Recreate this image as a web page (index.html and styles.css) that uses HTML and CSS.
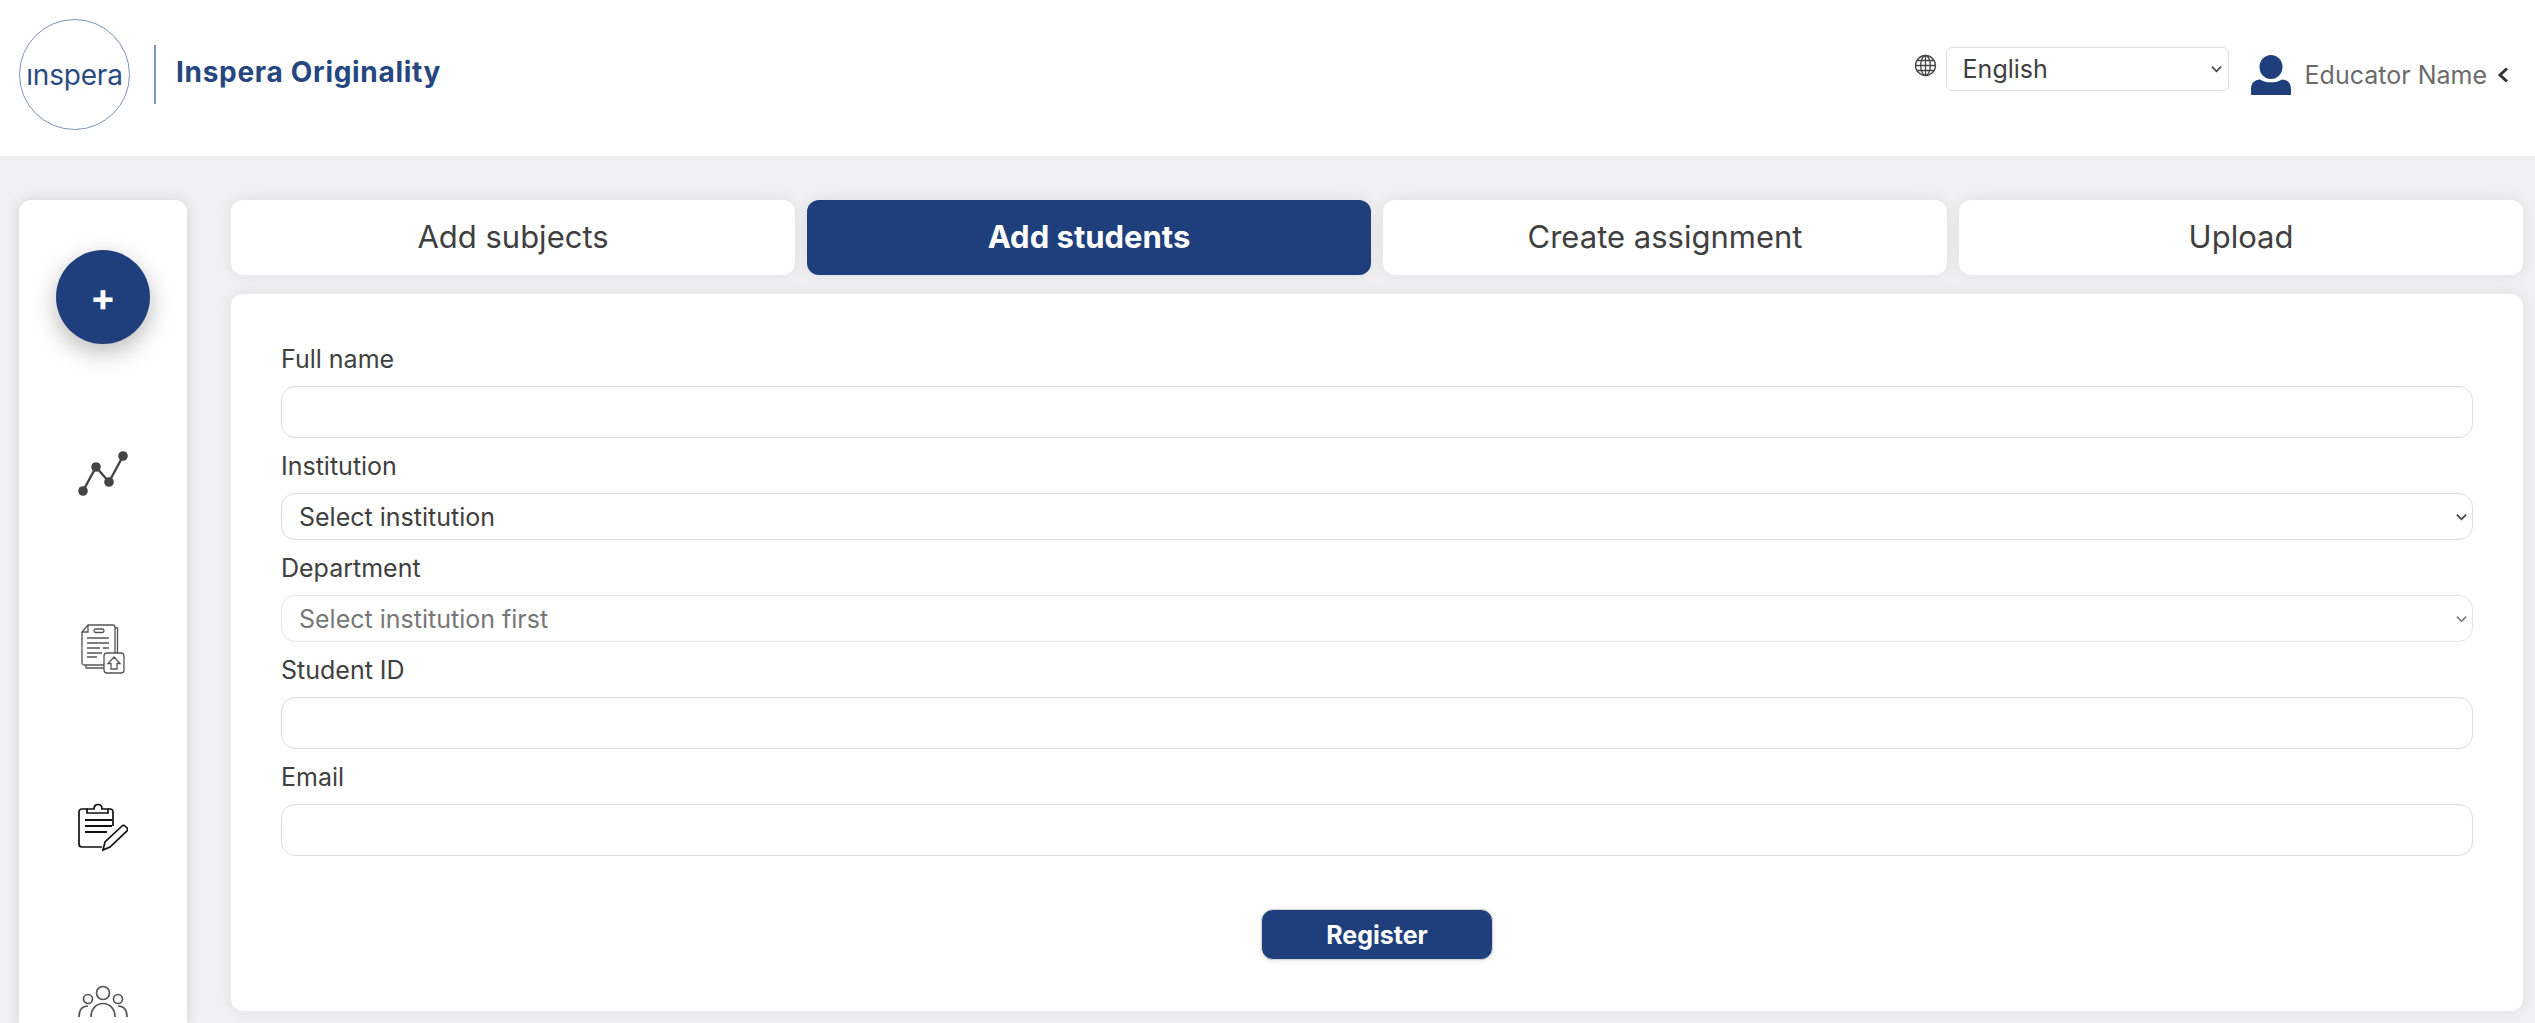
FILE: index.html
```html
<!DOCTYPE html>
<html lang="en">
<head>
<meta charset="utf-8">
<title>Inspera Originality</title>
<link rel="stylesheet" href="styles.css">
</head>
<body>
<header class="topbar">
  <div class="brand">
    <div class="logo-circle"><span class="logo-word">ınspera</span></div>
    <div class="brand-rule"></div>
    <div class="brand-name">Inspera Originality</div>
  </div>
  <div class="top-actions">
    <svg class="globe" viewBox="0 0 22 23" fill="none" stroke="#444" stroke-width="1.300">
      <circle cx="11" cy="11.500" r="10"/><ellipse cx="11" cy="11.500" rx="4.800" ry="10"/>
      <path d="M11 1.500v20M1 11.500h20M2.400 6.500h17.200M2.400 16.500h17.200"/>
    </svg>
    <select class="lang"><option>English</option></select>
    <svg class="user" viewBox="0 0 40 40" fill="#1e3f7c">
      <ellipse cx="20" cy="12" rx="11.500" ry="12"/>
      <path d="M0 40v-6c0-6 4-9.500 9-9.500 3 2 7 2.800 11 2.800s8-.8 11-2.800c5 0 9 3.500 9 9.500v6z"/>
    </svg>
    <span class="user-name">Educator Name</span>
    <svg class="caret" viewBox="0 0 12 16" fill="none" stroke="#333" stroke-width="3"><path d="M10 1.500 3 8l7 6.500"/></svg>
  </div>
</header>
<div class="page">
  <aside class="sidebar">
    <button class="fab">+</button>
    <svg class="nav-icon nav-chart" viewBox="0 0 50 46" fill="#444" stroke="#444" stroke-width="2.400">
      <path d="M5 40 18 16 31 31 45 5" fill="none"/>
      <circle cx="5" cy="40" r="4.800" stroke="none"/><circle cx="18" cy="16" r="4.800" stroke="none"/><circle cx="31" cy="31" r="4.800" stroke="none"/><circle cx="45" cy="5" r="4.800" stroke="none"/>
    </svg>
    <svg class="nav-icon nav-doc" viewBox="0 0 44 50" fill="none" stroke="#555" stroke-width="1.300">
      <path d="M7 1h25a2 2 0 0 1 2 2v38H3a2 2 0 0 1-2-2V8z"/>
      <path d="M7 1v7H1"/><path d="M34 4h2.500v40H5V41"/>
      <rect x="13" y="5" width="10" height="3.500" rx="1.700"/>
      <path d="M6 14h22M6 19h22M6 24h13M22 24h6M6 29h15M6 33h10"/>
      <rect x="23" y="29" width="20" height="20" rx="3" fill="#fff"/>
      <path d="M33 33l6 6.500h-3V45h-6v-5.500h-3z"/>
    </svg>
    <svg class="nav-icon nav-clip" viewBox="0 0 50 50" fill="none" stroke="#111" stroke-width="1.700">
      <path d="M10 7H4a3 3 0 0 0-3 3v32a3 3 0 0 0 3 3h20M30 7h2a3 3 0 0 1 3 3v14"/>
      <path d="M9 11V7h7c0-6 8-6 8 0h6v4z" fill="#fff"/>
      <path d="M7 18h27M7 24h27M7 30h22" stroke-width="1.800"/>
      <path d="M25 48l2-8 17-16a2 2 0 0 1 3 0l2 2a2 2 0 0 1 0 3L32 45z"/>
    </svg>
    <svg class="nav-icon nav-people" viewBox="0 0 50 32" fill="none" stroke="#555" stroke-width="1.700">
      <circle cx="25" cy="8" r="6.500"/><circle cx="10" cy="14" r="4.500"/><circle cx="40" cy="14" r="4.500"/>
      <path d="M13 32c0-18 24-18 24 0M1 32c0-8 4-11 9-11M49 32c0-8-4-11-9-11"/>
    </svg>
  </aside>
  <main class="content">
    <nav class="tabs">
      <div class="tab">Add subjects</div>
      <div class="tab tab-active">Add students</div>
      <div class="tab">Create assignment</div>
      <div class="tab">Upload</div>
    </nav>
    <section class="panel">
      <label class="field-label">Full name</label>
      <input class="control text-input" type="text">
      <label class="field-label">Institution</label>
      <select class="control picker"><option>Select institution</option></select>
      <label class="field-label">Department</label>
      <select class="control picker picker-off" disabled><option>Select institution first</option></select>
      <label class="field-label">Student ID</label>
      <input class="control text-input" type="text">
      <label class="field-label">Email</label>
      <input class="control text-input" type="text">
      <div class="actions"><button class="register">Register</button></div>
    </section>
  </main>
</div>
</body>
</html>
```
FILE: styles.css
```css
* { box-sizing: border-box; }
html, body { margin: 0; height: 1023px; overflow: hidden; }
body { background: #f0f0f3; font-family: Inter, "Liberation Sans", sans-serif; color: #404040; }

.topbar { height: 156px; background: #fff; display: flex; justify-content: space-between; align-items: flex-start; padding: 19px 26px 0 19px; }
.brand { display: flex; align-items: center; }
.logo-circle { width: 111px; height: 111px; border: 1.500px solid #7d91b6; border-radius: 50%; display: flex; align-items: center; justify-content: center; }
.logo-word { color: #2b4b83; font-size: 28px; font-weight: 400; letter-spacing: -0.200px; }
.brand-rule { width: 2px; height: 59px; background: #8194b8; margin: 0 20px 0 24px; }
.brand-name { color: #25467f; font-size: 28px; font-weight: 700; letter-spacing: 0.700px; margin-top: -6px; }

.top-actions { display: flex; align-items: flex-start; padding-top: 28px; }
.globe { width: 23px; height: 23px; margin-top: 7px; margin-right: 9px; }
.lang { appearance: none; width: 283px; height: 44px; margin-right: 22px; border: 1px solid #e0e0e0; border-radius: 6px; background: #fff url("data:image/svg+xml,%3Csvg xmlns='http://www.w3.org/2000/svg' viewBox='0 0 12 8'%3E%3Cpath d='M1 1.500 6 6.500 11 1.500' fill='none' stroke='%23444' stroke-width='1.800'/%3E%3C/svg%3E") no-repeat right 6px center / 11px 8px; color: #404040; font: 400 25px Inter, sans-serif; padding-left: 16px; }
.user { width: 40px; height: 40px; margin-top: 8px; margin-right: 14px; }
.user-name { font-size: 25px; line-height: 30px; color: #6b6b6b; margin-top: 13px; margin-right: 10px; white-space: nowrap; }
.caret { width: 12px; height: 16px; margin-top: 20px; }

.page { display: flex; align-items: flex-start; padding: 44px 12px 0 19px; gap: 44px; }
.sidebar { width: 168px; height: 823px; flex: none; overflow: hidden; background: #fff; border-radius: 12px 12px 0 0; box-shadow: 0 0 14px rgba(0, 0, 0, 0.12); display: flex; flex-direction: column; align-items: center; padding-top: 50px; }
.fab { width: 94px; height: 94px; flex: none; border: 0; border-radius: 50%; background: #1e3f7c; color: #fff; font: 700 38px/94px Inter, sans-serif; padding: 0; box-shadow: 0 8px 24px rgba(0, 0, 0, 0.28); }
.nav-icon { display: block; flex: none; }
.nav-chart { width: 50px; height: 46px; margin-top: 107px; }
.nav-doc { width: 44px; height: 50px; margin-top: 127px; }
.nav-clip { width: 50px; height: 50px; margin-top: 128px; }
.nav-people { width: 50px; height: 32px; margin-top: 133px; }

.content { flex: 1; min-width: 0; }
.tabs { display: grid; grid-template-columns: repeat(4, 1fr); gap: 12px; }
.tab { height: 75px; background: #fff; border-radius: 12px; box-shadow: 0 0 16px rgba(0, 0, 0, 0.07); display: flex; align-items: center; justify-content: center; font-size: 31px; color: #404040; padding-bottom: 2px; }
.tab-active { background: #1e3f7c; color: #fff; font-weight: 700; }

.panel { margin-top: 19px; height: 717px; background: #fff; border-radius: 12px; box-shadow: 0 0 16px rgba(0, 0, 0, 0.07); padding: 51px 50px 0; display: flex; flex-direction: column; }
.field-label { display: block; font-size: 25px; line-height: 29px; height: 41px; }
.control { display: block; width: 100%; background: #fff; border: 1.500px solid #dddddd; border-radius: 14px; margin-bottom: 14px; outline: 0; }
.text-input { height: 52px; }
.picker { appearance: none; height: 47px; font: 400 25px Inter, sans-serif; color: #404040; padding-left: 17px; background: #fff url("data:image/svg+xml,%3Csvg xmlns='http://www.w3.org/2000/svg' viewBox='0 0 12 8'%3E%3Cpath d='M1 1.500 6 6.500 11 1.500' fill='none' stroke='%23444' stroke-width='2'/%3E%3C/svg%3E") no-repeat right 5px center / 11px 8px; }
.picker-off { color: #777; opacity: 1; border-color: #e6e6e6; background-image: url("data:image/svg+xml,%3Csvg xmlns='http://www.w3.org/2000/svg' viewBox='0 0 12 8'%3E%3Cpath d='M1 1.500 6 6.500 11 1.500' fill='none' stroke='%23808080' stroke-width='2'/%3E%3C/svg%3E"); }
.actions { display: flex; justify-content: center; margin-top: 39px; }
.register { width: 232px; height: 51px; border: 1px solid #d4d4d8; border-radius: 12px; background: #1e3f7c; color: #fff; font: 700 25px Inter, sans-serif; box-shadow: 0 1px 5px rgba(0, 0, 0, 0.1); }
```
